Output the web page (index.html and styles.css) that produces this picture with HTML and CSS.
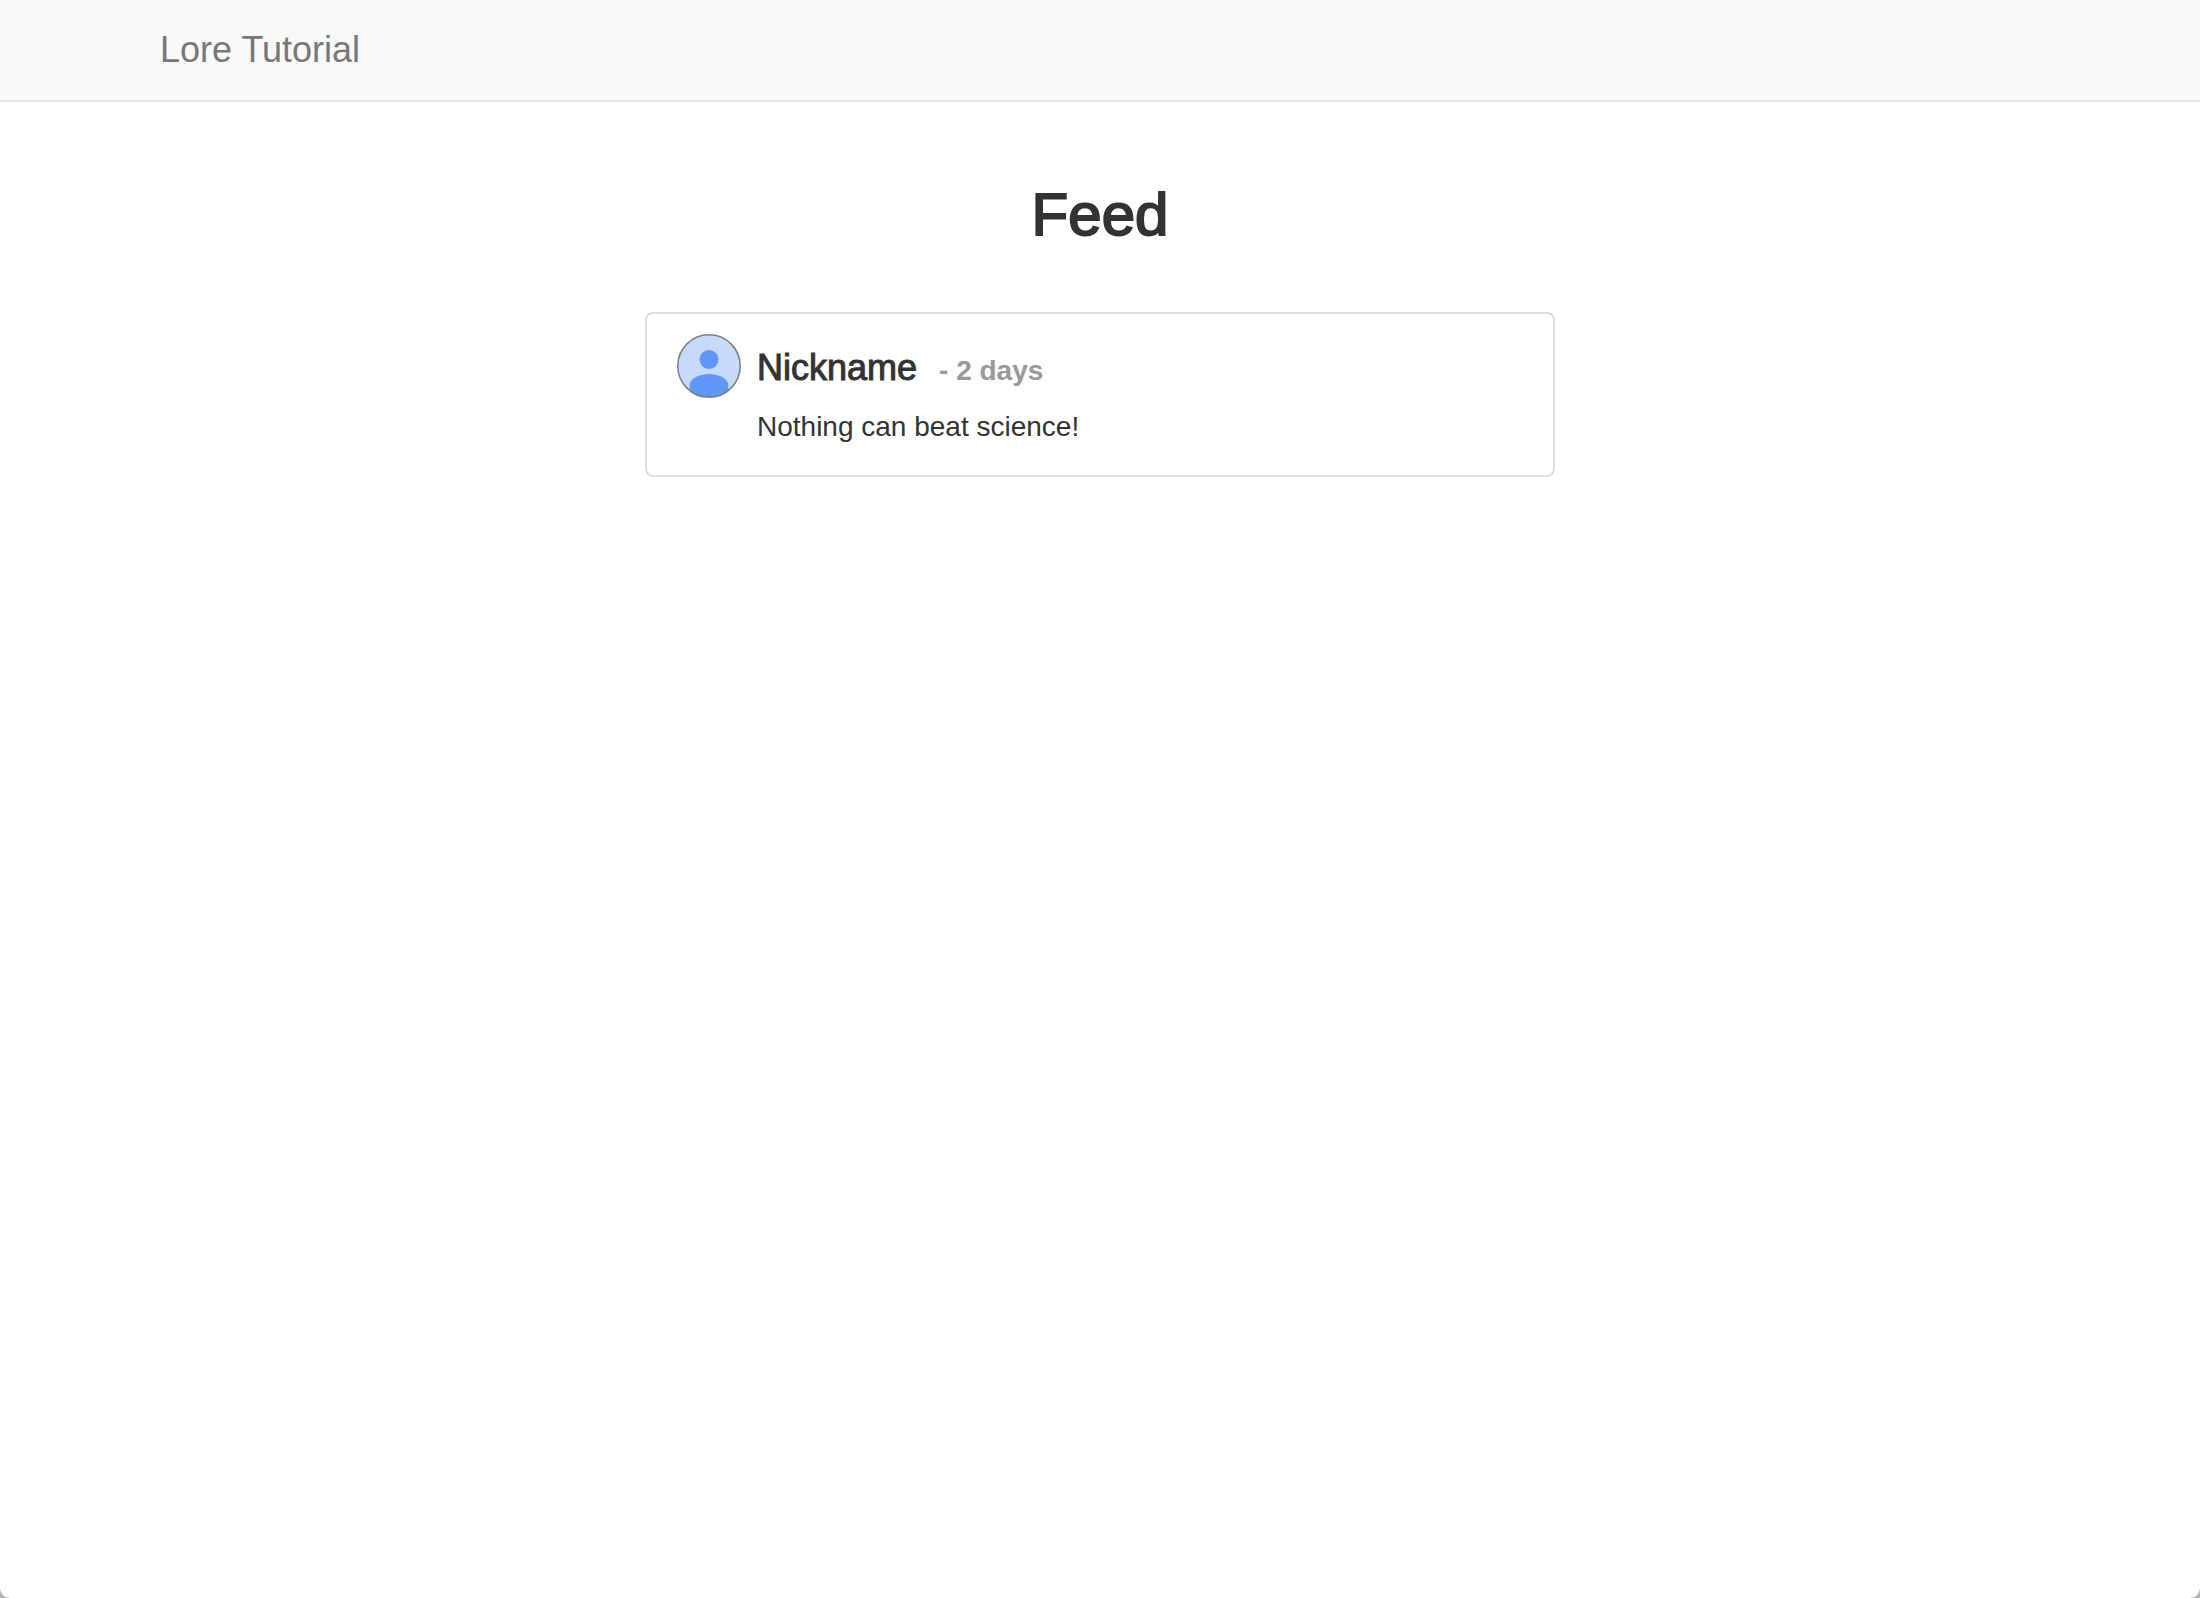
FILE: index.html
```html
<!DOCTYPE html>
<html lang="en">
<head>
  <meta charset="utf-8">
  <meta name="viewport" content="width=device-width, initial-scale=1">
  <title>Lore Tutorial</title>
  <link rel="stylesheet" href="styles.css">
</head>
<body>
  <div class="window">
    <nav class="navbar">
      <div class="container">
        <a class="brand" href="#">Lore Tutorial</a>
      </div>
    </nav>
    <main class="container feed">
      <h2 class="feed-title">Feed</h2>
      <ul class="posts">
        <li class="post">
          <svg class="avatar" viewBox="0 0 64 64" role="img" aria-label="Nickname">
            <defs>
              <clipPath id="avatar-clip"><circle cx="32" cy="32" r="31"/></clipPath>
            </defs>
            <g clip-path="url(#avatar-clip)">
              <rect width="64" height="64" fill="#c6dafb"/>
              <circle cx="32" cy="25.500" r="9.5" fill="#5e97f6"/>
              <path d="M12.7 64V50C14 43.500 24 40 32 40S50 43.500 51.300 50V64Z" fill="#5e97f6"/>
            </g>
            <circle cx="32" cy="32" r="31.200" fill="none" stroke="#808080" stroke-width="1.600"/>
          </svg>
          <div class="post-body">
            <h4 class="post-heading">
              <span class="nickname">Nickname</span>
              <small class="age">- 2 days</small>
            </h4>
            <p class="message">Nothing can beat science!</p>
          </div>
        </li>
      </ul>
    </main>
  </div>
</body>
</html>
```
FILE: styles.css
```css
* {
  box-sizing: border-box;
}

html {
  background: #b4b4b4;
}

body {
  margin: 0;
  color: #333;
  font-family: "Helvetica Neue", Helvetica, "Liberation Sans", Arial, sans-serif;
  font-size: 28px;
  line-height: 40px;
}

.window {
  min-height: 100vh;
  background: #fff;
  border-radius: 0 0 10px 10px;
}

.container {
  max-width: 1940px;
  margin: 0 auto;
  padding: 0 30px;
}

.navbar {
  padding: 30px 0;
  background: #f8f8f8;
  border-bottom: 2px solid #e7e7e7;
}

.brand {
  display: block;
  width: fit-content;
  color: #777;
  font-size: 36px;
  text-decoration: none;
}

.feed {
  padding-top: 80px;
}

.feed-title {
  margin: 0 0 64px;
  font-size: 60px;
  font-weight: 400;
  line-height: 66px;
  text-align: center;
  -webkit-text-stroke: 2px currentColor;
}

.posts {
  max-width: 910px;
  margin: 0 auto;
  padding: 0;
  list-style: none;
}

.post {
  display: flex;
  gap: 16px;
  padding: 20px 30px 28px;
  border: 2px solid #ddd;
  border-radius: 8px;
}

.avatar {
  flex: none;
  width: 64px;
  height: 64px;
}

.post-heading {
  display: flex;
  align-items: baseline;
  gap: 22px;
  margin: 14px 0 16px;
  font-size: 36px;
  font-weight: 400;
  line-height: 40px;
}

.nickname {
  -webkit-text-stroke: 1px currentColor;
}

.age {
  color: #999;
  font-size: 28px;
  font-weight: 700;
}

.message {
  margin: 0;
}
```
